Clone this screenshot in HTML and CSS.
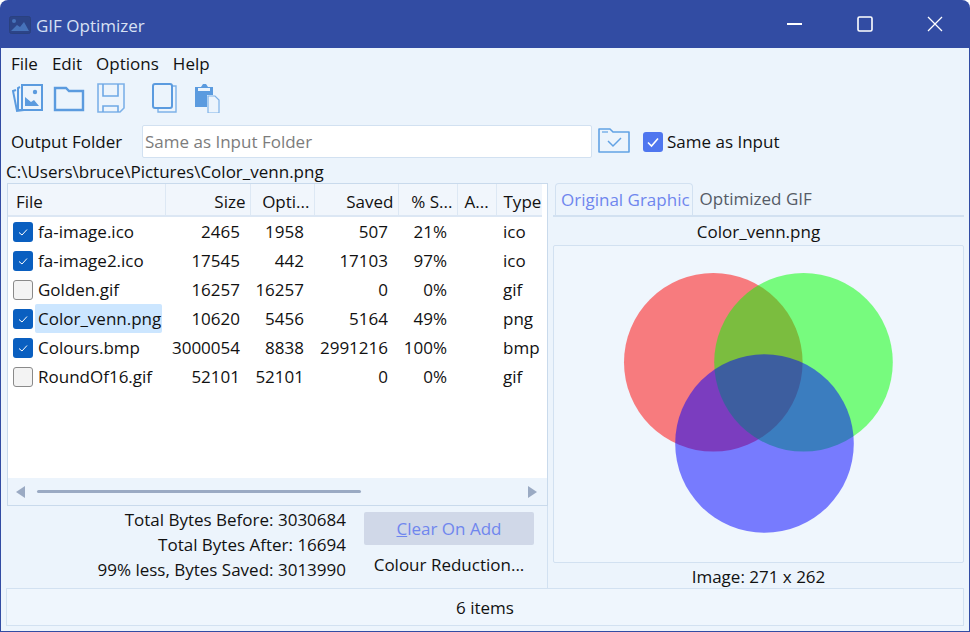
FILE: index.html
```html
<!DOCTYPE html>
<html lang="en">
<head>
<meta charset="UTF-8">
<title>GIF Optimizer</title>
<link rel="stylesheet" href="styles.css">
</head>
<body>
<div class="window">
    <div class="titlebar">
        <svg class="app-icon" width="22" height="18" viewBox="0 0 22 18">
            <rect x="0.5" y="0.5" width="21" height="17" rx="2" fill="#2c4488" stroke="#2a417f"/>
            <circle cx="5" cy="5" r="2" fill="#4672ba"/>
            <path d="M2 15 L8 9 L11 11 L15 6 L20 15 Z" fill="#4672ba"/>
        </svg>
        <span class="app-title">GIF Optimizer</span>
        <div class="caption">
            <svg width="16" height="16" viewBox="0 0 16 16"><path d="M0 8 H15" stroke="#fff" stroke-width="2"/></svg>
            <svg width="16" height="16" viewBox="0 0 16 16"><rect x="1" y="1" width="14" height="14" rx="1.5" fill="none" stroke="#fff" stroke-width="1.6"/></svg>
            <svg width="16" height="16" viewBox="0 0 16 16"><path d="M1 1 L15 15 M15 1 L1 15" stroke="#fff" stroke-width="1.3"/></svg>
        </div>
    </div>
    <div class="client">
        <div class="menu">
            <span>File</span><span>Edit</span><span>Options</span><span>Help</span>
        </div>
        <div class="toolbar">
            <svg class="tool tool-pictures" width="32" height="30" viewBox="0 0 32 30">
                <path d="M4 7 L1 8 L5 28 L12 27" fill="none" stroke="#5b9bdf" stroke-width="2"/>
                <path d="M8 4 L6 5 V27 H9" fill="none" stroke="#5b9bdf" stroke-width="2"/>
                <rect x="10" y="2" width="20" height="25" fill="none" stroke="#5b9bdf" stroke-width="2"/>
                <circle cx="23" cy="9" r="2.2" fill="#5b9bdf"/>
                <path d="M13 23 V14 L19 19 L22 17 L27 23 Z" fill="#5b9bdf"/>
            </svg>
            <svg class="tool tool-folder" width="32" height="30" viewBox="0 0 32 30">
                <path d="M2 5 H13 L16 8 H30 V27 H2 Z" fill="none" stroke="#5b9bdf" stroke-width="2.4"/>
            </svg>
            <svg class="tool tool-save" width="28" height="30" viewBox="0 0 28 30">
                <path d="M1 1 H27 V25 L23 29 H1 Z" fill="none" stroke="#7db1e8" stroke-width="1.6"/>
                <path d="M6 1 V13 H21 V1 M6 29 V23 H21 V29" fill="none" stroke="#6ea8e5" stroke-width="1.6"/>
            </svg>
            <svg class="tool tool-copy" width="26" height="30" viewBox="0 0 26 30">
                <path d="M20 3 H24 V29 H6 V25" fill="none" stroke="#7db1e8" stroke-width="1.4"/>
                <rect x="1" y="1" width="19" height="24" rx="2" fill="none" stroke="#5b9bdf" stroke-width="2"/>
            </svg>
            <svg class="tool" width="26" height="30" viewBox="0 0 26 30">
                <path d="M1 4 H7 L9 1 H12 L14 4 H19 V12 H13 V24 H1 Z" fill="#5b9bdf"/>
                <path d="M4 5 H16 V8 H4 Z" fill="#ecf4fc"/>
                <path d="M14 13 H21 L25 17 V30 H14 Z" fill="#ecf4fc" stroke="#7db1e8" stroke-width="1.2"/>
            </svg>
        </div>
        <div class="output">
            <label class="output-label">Output Folder</label>
            <div class="text-input">Same as Input Folder</div>
            <svg class="browse" width="32" height="26" viewBox="0 0 32 26">
                <path d="M1 2 H12 L15 5 H31 V25 H1 Z" fill="none" stroke="#62a2e4" stroke-width="1.6" stroke-linejoin="round"/>
                <path d="M4 5 H10" stroke="#62a2e4" stroke-width="1.2"/>
                <path d="M10 14 L15 19 L23 11" fill="none" stroke="#62a2e4" stroke-width="1.5"/>
            </svg>
            <div class="check check-accent">
                <svg width="20" height="20" viewBox="0 0 20 20"><path d="M5 10.5 L8.5 14 L15 6.5" fill="none" stroke="#fff" stroke-width="1.6"/></svg>
            </div>
            <span class="same-label">Same as Input</span>
        </div>
        <div class="path">C:\Users\bruce\Pictures\Color_venn.png</div>
        <div class="main">
            <div class="left">
                <div class="list">
                    <table class="files">
                        <colgroup>
                            <col class="c-file"><col class="c-size"><col class="c-opti"><col class="c-saved"><col class="c-pct"><col class="c-a"><col class="c-type">
                        </colgroup>
                        <thead>
                            <tr>
                                <th class="l">File</th><th>Size</th><th>Opti...</th><th>Saved</th><th>% S...</th><th class="l">A...</th><th class="l">Type</th>
                            </tr>
                        </thead>
                        <tbody>
                            <tr>
                                <td><div class="name"><span class="check check-blue"><svg width="20" height="20" viewBox="0 0 20 20"><path d="M6 10.5 L9 13 L14 7.5" fill="none" stroke="#fff" stroke-width="1"/></svg></span><span class="fname">fa-image.ico</span></div></td>
                                <td>2465</td><td>1958</td><td>507</td><td>21%</td><td></td><td class="l">ico</td>
                            </tr>
                            <tr>
                                <td><div class="name"><span class="check check-blue"><svg width="20" height="20" viewBox="0 0 20 20"><path d="M6 10.5 L9 13 L14 7.5" fill="none" stroke="#fff" stroke-width="1"/></svg></span><span class="fname">fa-image2.ico</span></div></td>
                                <td>17545</td><td>442</td><td>17103</td><td>97%</td><td></td><td class="l">ico</td>
                            </tr>
                            <tr>
                                <td><div class="name"><span class="check check-off"></span><span class="fname">Golden.gif</span></div></td>
                                <td>16257</td><td>16257</td><td>0</td><td>0%</td><td></td><td class="l">gif</td>
                            </tr>
                            <tr>
                                <td><div class="name"><span class="check check-blue"><svg width="20" height="20" viewBox="0 0 20 20"><path d="M6 10.5 L9 13 L14 7.5" fill="none" stroke="#fff" stroke-width="1"/></svg></span><span class="fname selected">Color_venn.png</span></div></td>
                                <td>10620</td><td>5456</td><td>5164</td><td>49%</td><td></td><td class="l">png</td>
                            </tr>
                            <tr>
                                <td><div class="name"><span class="check check-blue"><svg width="20" height="20" viewBox="0 0 20 20"><path d="M6 10.5 L9 13 L14 7.5" fill="none" stroke="#fff" stroke-width="1"/></svg></span><span class="fname">Colours.bmp</span></div></td>
                                <td>3000054</td><td>8838</td><td>2991216</td><td>100%</td><td></td><td class="l">bmp</td>
                            </tr>
                            <tr>
                                <td><div class="name"><span class="check check-off"></span><span class="fname">RoundOf16.gif</span></div></td>
                                <td>52101</td><td>52101</td><td>0</td><td>0%</td><td></td><td class="l">gif</td>
                            </tr>
                        </tbody>
                    </table>
                    <div class="scrollbar">
                        <span class="arrow arrow-left"></span>
                        <div class="track"><div class="thumb"></div></div>
                        <span class="arrow arrow-right"></span>
                    </div>
                </div>
                <div class="totals">
                    <div class="stats">
                        <div>Total Bytes Before: 3030684</div>
                        <div>Total Bytes After: 16694</div>
                        <div>99% less, Bytes Saved: 3013990</div>
                    </div>
                    <div class="actions">
                        <div class="button"><u>C</u>lear On Add</div>
                        <div class="reduction">Colour Reduction...</div>
                    </div>
                </div>
            </div>
            <div class="right">
                <div class="tabs">
                    <div class="tab tab-active">Original Graphic</div>
                    <div class="tab">Optimized GIF</div>
                </div>
                <div class="caption-text">Color_venn.png</div>
                <div class="preview">
                    <svg width="271" height="262" viewBox="0 0 271 262">
                        <circle cx="90.3" cy="89.3" r="89.3" fill="#ff0000" fill-opacity="0.5"/>
                        <circle cx="180.5" cy="89.3" r="89.3" fill="#00ff00" fill-opacity="0.5"/>
                        <circle cx="141.5" cy="170.5" r="89.3" fill="#0000ff" fill-opacity="0.5"/>
                    </svg>
                </div>
                <div class="caption-text">Image: 271 x 262</div>
            </div>
        </div>
        <div class="status">6 items</div>
    </div>
</div>
</body>
</html>
```

FILE: styles.css
```css
* {
    box-sizing: border-box;
}
body {
    margin: 0;
    background-color: #ffffff;
    font-family: "Open Sans", "Noto Sans", sans-serif;
    font-size: 17px;
    color: #111111;
}
.window {
    width: 970px;
    height: 632px;
    display: flex;
    flex-direction: column;
    background-color: #324ca3;
    border-radius: 8px 8px 0 0;
    padding: 0 1px 1px 1px;
}
.titlebar {
    height: 48px;
    flex: none;
    display: flex;
    align-items: center;
    padding-left: 8px;
    color: #d8e1f3;
}
.app-icon {
    margin-right: 5px;
    margin-top: 2px;
}
.app-title {
    margin-top: 3px;
}
.caption {
    margin-left: auto;
    display: flex;
    gap: 54px;
    padding-right: 26px;
}
.client {
    flex: 1;
    display: flex;
    flex-direction: column;
    background-color: #ecf4fc;
}
.menu {
    display: flex;
    gap: 14px;
    padding: 4px 10px 0;
    height: 31px;
}
.toolbar {
    display: flex;
    align-items: center;
    height: 38px;
    padding-left: 11px;
}
.tool {
    margin-right: 10px;
    flex: none;
}
.tool-pictures {
    margin-right: 9px;
}
.tool-folder {
    margin-right: 12px;
}
.tool-save {
    margin-right: 27px;
}
.tool-copy {
    margin-right: 16px;
}
.output {
    display: flex;
    align-items: center;
    margin-top: 8px;
    height: 33px;
    padding-left: 10px;
}
.output-label {
    width: 131px;
}
.text-input {
    width: 450px;
    height: 33px;
    line-height: 31px;
    padding-left: 2px;
    background-color: #ffffff;
    border: 1px solid #d2e1f1;
    border-radius: 2px;
    color: #7c7c7c;
}
.browse {
    margin-left: 6px;
    margin-right: 13px;
    margin-bottom: 4px;
}
.check {
    width: 20px;
    height: 20px;
    border-radius: 3px;
    flex: none;
    display: block;
}
.check svg {
    display: block;
}
.check-accent {
    background-color: #4f76ef;
}
.check-blue {
    background-color: #0a5fc0;
}
.check-off {
    background-color: #f3f3f3;
    border: 1px solid #8a8a8a;
}
.same-label {
    margin-left: 4px;
}
.path {
    height: 25px;
    padding: 3px 0 0 5px;
    line-height: 21px;
}
.main {
    flex: 1;
    display: flex;
}
.left {
    width: 547px;
    flex: none;
    display: flex;
    flex-direction: column;
    border-right: 1px solid #d2e1f1;
    padding-left: 6px;
}
.list {
    height: 323px;
    flex: none;
    display: flex;
    flex-direction: column;
    border: 1px solid #c9daec;
    width: 541px;
    background-color: #ffffff;
}
.files {
    table-layout: fixed;
    width: 534px;
    border-collapse: collapse;
}
.c-file { width: 157px; }
.c-size { width: 85px; }
.c-opti { width: 64px; }
.c-saved { width: 84px; }
.c-pct { width: 59px; }
.c-a { width: 39px; }
.c-type { width: 46px; }
.files th {
    height: 32px;
    padding: 3px 4px 0 7px;
    font-weight: normal;
    text-align: right;
    background-color: #f1f6fc;
    border-right: 1px solid #dde8f4;
    border-bottom: 2px solid #dce7f4;
    white-space: nowrap;
    overflow: hidden;
}
.files th:first-child {
    padding-left: 8px;
}
.files th.l {
    text-align: left;
}
.files th:last-child {
    border-right: none;
}
.files td {
    height: 29px;
    padding: 0 10px 0 0;
    text-align: right;
    white-space: nowrap;
}
.files td.l {
    text-align: left;
    padding-left: 7px;
}
.files td:first-child {
    padding: 0;
    text-align: left;
}
.name {
    display: flex;
    align-items: center;
    padding-left: 5px;
}
.fname {
    margin-left: 2px;
    padding: 0 1px 0 3px;
    line-height: 29px;
}
.selected {
    background-color: #cce6ff;
    border-radius: 2px;
}
.scrollbar {
    margin-top: auto;
    height: 27px;
    display: flex;
    align-items: center;
    background-color: #ecf4fc;
    padding: 0 10px 0 8px;
}
.arrow {
    width: 0;
    height: 0;
    border-top: 6px solid transparent;
    border-bottom: 6px solid transparent;
    flex: none;
}
.arrow-left {
    border-right: 9px solid #9aaac3;
}
.arrow-right {
    border-left: 9px solid #9aaac3;
}
.track {
    flex: 1;
    padding: 0 12px;
}
.thumb {
    width: 324px;
    height: 3px;
    border-radius: 2px;
    background-color: #9aaac3;
}
.totals {
    flex: 1;
    display: flex;
}
.stats {
    width: 339px;
    padding-top: 1px;
    text-align: right;
    line-height: 25px;
}
.actions {
    margin-left: 18px;
    margin-top: 6px;
    width: 170px;
    text-align: center;
}
.button {
    height: 33px;
    line-height: 33px;
    background-color: #d0d8e8;
    border-radius: 2px;
    color: #6f86ee;
}
.reduction {
    margin-top: 8px;
    line-height: 24px;
    white-space: nowrap;
}
.right {
    flex: 1;
    display: flex;
    flex-direction: column;
    padding: 0 5px;
}
.tabs {
    display: flex;
    height: 34px;
    flex: none;
    border-bottom: 2px solid #d2e1f1;
    padding-left: 2px;
}
.tab {
    line-height: 32px;
    padding: 0 3px 0 7px;
    color: #555b66;
    white-space: nowrap;
}
.tab-active {
    padding: 0 2px 0 5px;
    color: #6f86ee;
    border: 1px solid #d2e1f1;
    border-bottom: none;
    border-radius: 4px 4px 0 0;
}
.caption-text {
    height: 25px;
    text-align: center;
    line-height: 28px;
    flex: none;
}
.right .tabs + .caption-text {
    height: 28px;
    line-height: 30px;
}
.preview {
    height: 318px;
    flex: none;
    display: flex;
    align-items: center;
    justify-content: center;
    background-color: #eff6fd;
    border: 1px solid #d2e1f1;
    border-radius: 2px;
}
.status {
    margin: 0 5px 5px 5px;
    height: 38px;
    flex: none;
    line-height: 37px;
    text-align: center;
    border: 1px solid #d2e1f1;
    background-color: #eff6fd;
}
```
